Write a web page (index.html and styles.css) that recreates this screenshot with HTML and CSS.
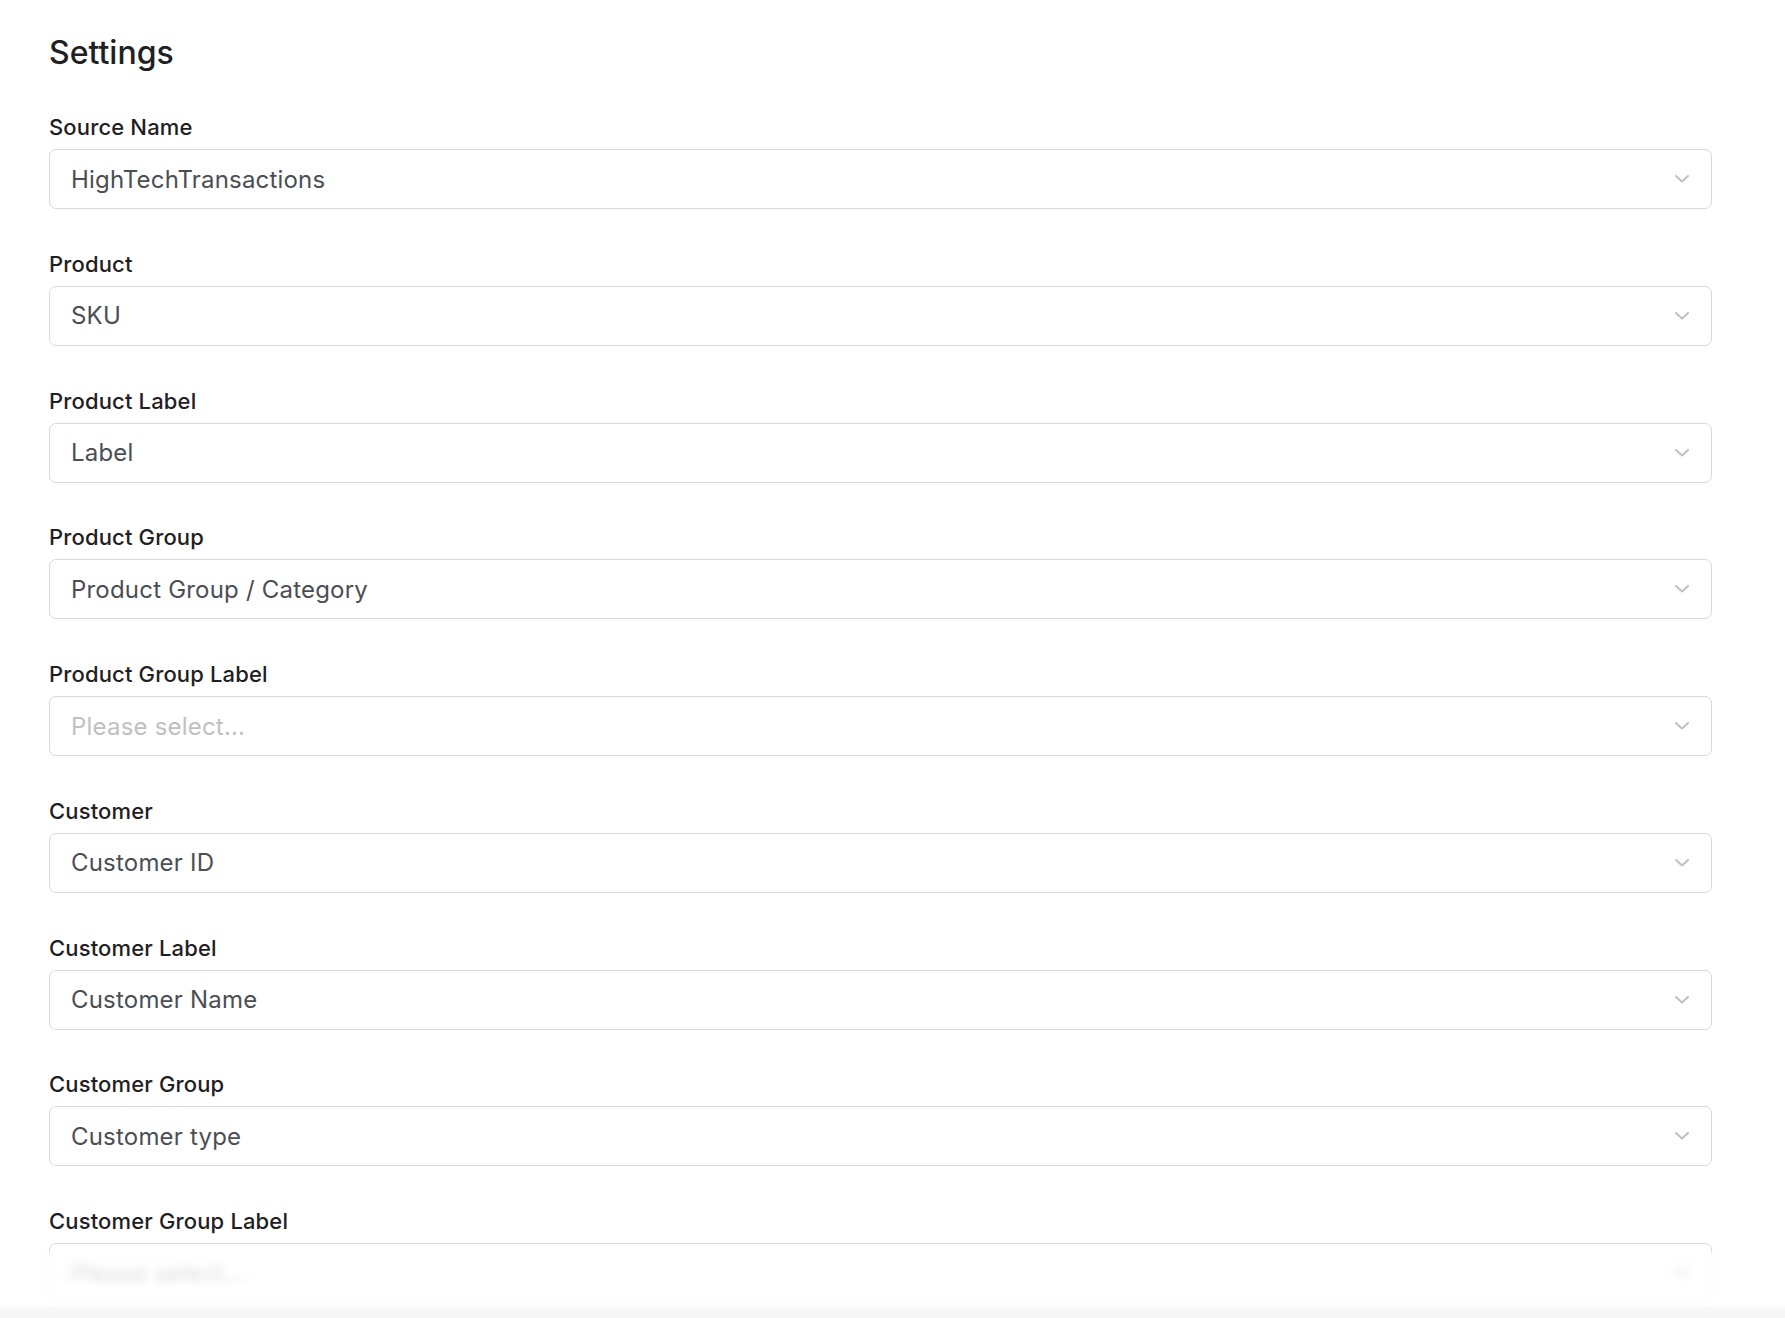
FILE: index.html
```html
<!DOCTYPE html>
<html>
<head>
  <title>Settings</title>
  <link rel="stylesheet" href="styles.css">
</head>
<body>
  <div class="settings">
    <div class="header">Settings</div>

    <div class="field">
      <div class="field-label">Source Name</div>
      <div class="select">
        <span class="select-value">HighTechTransactions</span>
        <svg class="chevron" viewBox="0 0 14 8"><path d="M1 1l6 5.5L13 1"/></svg>
      </div>
    </div>

    <div class="field">
      <div class="field-label">Product</div>
      <div class="select">
        <span class="select-value">SKU</span>
        <svg class="chevron" viewBox="0 0 14 8"><path d="M1 1l6 5.5L13 1"/></svg>
      </div>
    </div>

    <div class="field">
      <div class="field-label">Product Label</div>
      <div class="select">
        <span class="select-value">Label</span>
        <svg class="chevron" viewBox="0 0 14 8"><path d="M1 1l6 5.5L13 1"/></svg>
      </div>
    </div>

    <div class="field">
      <div class="field-label">Product Group</div>
      <div class="select">
        <span class="select-value">Product Group / Category</span>
        <svg class="chevron" viewBox="0 0 14 8"><path d="M1 1l6 5.5L13 1"/></svg>
      </div>
    </div>

    <div class="field">
      <div class="field-label">Product Group Label</div>
      <div class="select">
        <span class="select-value placeholder">Please select...</span>
        <svg class="chevron" viewBox="0 0 14 8"><path d="M1 1l6 5.5L13 1"/></svg>
      </div>
    </div>

    <div class="field">
      <div class="field-label">Customer</div>
      <div class="select">
        <span class="select-value">Customer ID</span>
        <svg class="chevron" viewBox="0 0 14 8"><path d="M1 1l6 5.5L13 1"/></svg>
      </div>
    </div>

    <div class="field">
      <div class="field-label">Customer Label</div>
      <div class="select">
        <span class="select-value">Customer Name</span>
        <svg class="chevron" viewBox="0 0 14 8"><path d="M1 1l6 5.5L13 1"/></svg>
      </div>
    </div>

    <div class="field">
      <div class="field-label">Customer Group</div>
      <div class="select">
        <span class="select-value">Customer type</span>
        <svg class="chevron" viewBox="0 0 14 8"><path d="M1 1l6 5.5L13 1"/></svg>
      </div>
    </div>

    <div class="field">
      <div class="field-label">Customer Group Label</div>
      <div class="select">
        <span class="select-value placeholder">Please select...</span>
        <svg class="chevron" viewBox="0 0 14 8"><path d="M1 1l6 5.5L13 1"/></svg>
      </div>
    </div>
  </div>

  <!-- frosted strip over the bottom of the list -->
  <div class="bottom-fade"></div>
</body>
</html>
```

FILE: styles.css
```css
html, body {
  margin: 0;
  height: 100%;
  overflow: hidden;
}

body {
  font-family: Inter, 'Noto Sans', sans-serif;
  color: #1f2023;
  background-color: #ffffff;
}

.settings {
  padding: 33px 73px 0 49px;
}

.header {
  font-size: 32px;
  line-height: 40px;
  font-weight: 500;
  color: #1f2023;
  margin-bottom: 40px;
}

.field {
  margin-bottom: 40.75px;
}

.field:last-child {
  margin-bottom: 0;
}

.field-label {
  font-size: 22px;
  line-height: 28px;
  font-weight: 500;
  letter-spacing: 0.15px;
  margin-bottom: 8px;
}

.select {
  height: 60px;
  box-sizing: border-box;
  border: 1px solid #d9d9d9;
  border-radius: 7px;
  padding: 0 22px 0 21px;
  display: flex;
  align-items: center;
  justify-content: space-between;
}

.select-value {
  font-size: 24px;
  letter-spacing: 0.2px;
  color: #4b4e54;
}

.select-value.placeholder {
  color: #bfbfbf;
}

.chevron {
  width: 14px;
  height: 8px;
  fill: none;
  stroke: #bfbfc4;
  stroke-width: 2;
  stroke-linecap: round;
  stroke-linejoin: round;
}

/* Frosted bottom edge */
.bottom-fade {
  position: fixed;
  left: 0;
  right: 0;
  bottom: 0;
  height: 66px;
  backdrop-filter: blur(4px);
  background: linear-gradient(to bottom, rgba(255,255,255,0.4) 0%, rgba(255,255,255,0.6) 80%, #f7f7f7 86%, #f5f5f5 100%);
}
```
